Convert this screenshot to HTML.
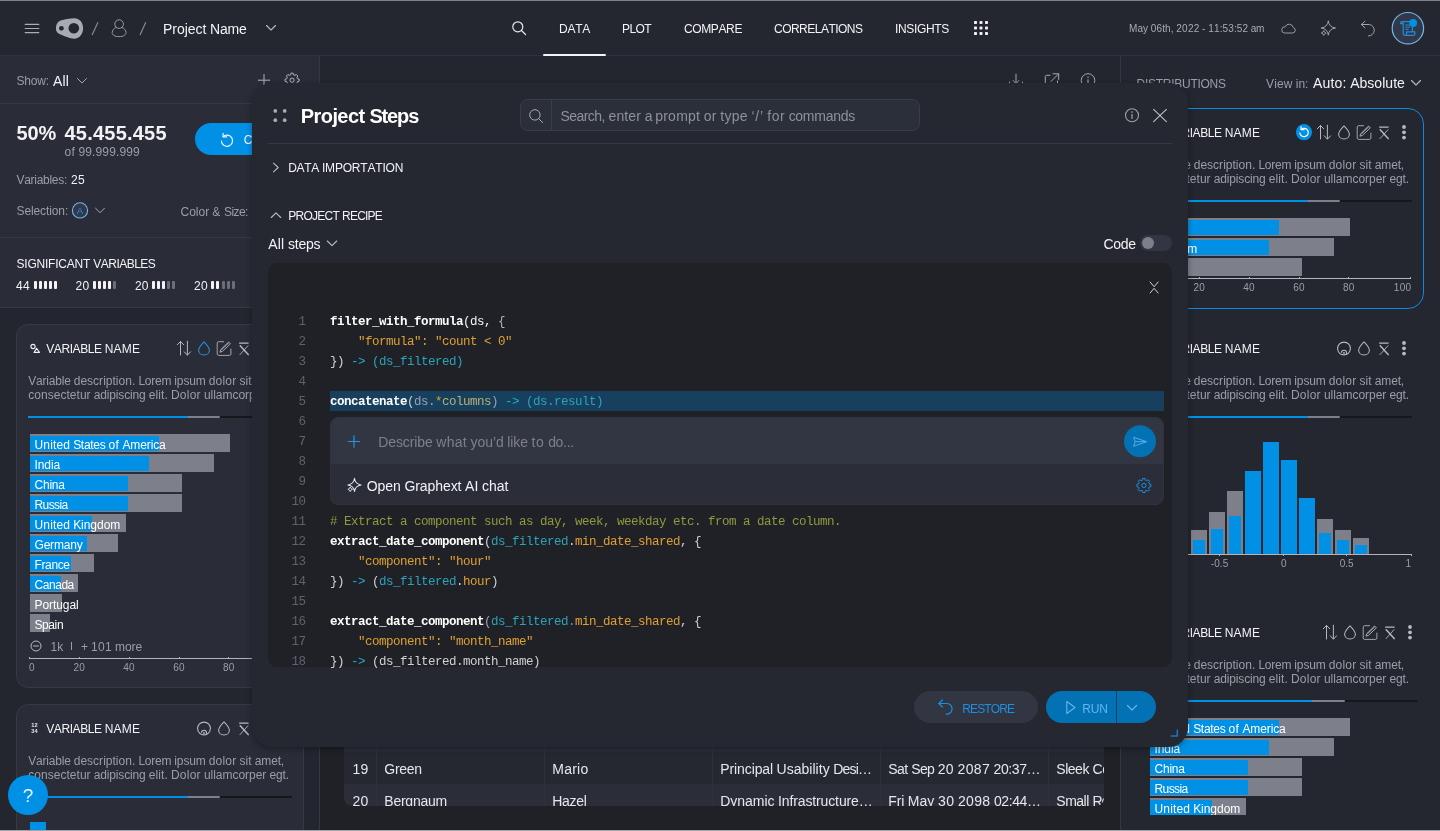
<!DOCTYPE html>
<html lang="en"><head><meta charset="utf-8"><title>Project Steps</title>
<style>
html,body{margin:0;padding:0;background:#1f2127;}
body{width:1440px;height:831px;overflow:hidden;}
#root{position:relative;width:1440px;height:831px;overflow:hidden;will-change:transform;font-family:"Liberation Sans",sans-serif;font-kerning:none;-webkit-font-smoothing:antialiased;}
.b{position:absolute;display:block;}
.t{position:absolute;white-space:pre;margin:0;}
.c{font-family:"Liberation Mono",monospace;font-size:12.5px;letter-spacing:-0.5px;line-height:20px;}
</style></head>
<body>
<div id="root">
<div class="b" style="left:320px;top:56px;width:800px;height:775px;background:#1f2127;"></div>
<div class="b" style="left:320px;top:56px;width:800px;height:48px;background:#23262f;"></div>
<svg class="b" style="left:1008px;top:72px;" width="16" height="18" viewBox="0 0 16 18" fill="none"><path d="M8 2.2 V11.4 M5.2 8.6 L8 11.6 L10.8 8.6" stroke="#a6a8b0" stroke-width="1" stroke-linecap="round" stroke-linejoin="round"/><path d="M1.5 10 V14.5 H14.5 V10" stroke="#a6a8b0" stroke-width="1" stroke-linecap="round" stroke-linejoin="round"/></svg>
<svg class="b" style="left:1044px;top:72px;" width="16" height="16" viewBox="0 0 16 16" fill="none"><path d="M6 3.3 H2.6 C1.8 3.3 1.3 3.8 1.3 4.6 V13.4 C1.3 14.2 1.8 14.7 2.6 14.7 H12.2 C13 14.7 13.5 14.2 13.5 13.4 V9" stroke="#a6a8b0" stroke-width="1" stroke-linecap="round"/><path d="M9 1.8 H14.7 V7.5 M14.5 2 L7 9.5" stroke="#a6a8b0" stroke-width="1" stroke-linecap="round" stroke-linejoin="round"/></svg>
<svg class="b" style="left:1080px;top:72px;" width="17" height="17" viewBox="0 0 17 17" fill="none"><g transform="translate(0 0.5)"><circle cx="8" cy="8" r="6.8" stroke="#a6a8b0" stroke-width="1"/><path d="M8 7.2 V11.4" stroke="#a6a8b0" stroke-width="1.1" stroke-linecap="round"/><circle cx="8" cy="4.8" r="0.75" fill="#a6a8b0"/></g></svg>
<div class="b" style="left:344px;top:720px;width:760px;height:86px;border-radius:0 0 8px 8px;overflow:hidden;">
<div class="b" style="left:0px;top:0px;width:760px;height:32px;background:#2b2e39;"></div>
<div class="t" style="left:8.50px;top:8px;font-size:14px;line-height:18px;color:#e6e7ea;letter-spacing:0.334px;">18</div>
<div class="t" style="left:40.30px;top:8px;font-size:14px;line-height:18px;color:#e6e7ea;letter-spacing:-0.162px;">Kuhlman</div>
<div class="t" style="left:208.30px;top:8px;font-size:14px;line-height:18px;color:#e6e7ea;letter-spacing:-0.722px;">Elsa</div>
<div class="t" style="left:376.30px;top:8px;font-size:14px;line-height:18px;color:#e6e7ea;word-spacing:-0.306px;"><span style="letter-spacing:-0.220px">Senior</span> <span style="letter-spacing:0.051px">Web</span> <span style="letter-spacing:-0.031px">Analyst</span></div>
<div class="t" style="left:544.30px;top:8px;font-size:14px;line-height:18px;color:#e6e7ea;word-spacing:-0.306px;"><span style="letter-spacing:-0.708px">Tue</span> <span style="letter-spacing:0.244px">Mar</span> <span style="letter-spacing:0.334px">11</span> <span style="letter-spacing:0.334px">2081</span> <span style="letter-spacing:-0.426px">09:12…</span></div>
<div class="t" style="left:712.30px;top:8px;font-size:14px;line-height:18px;color:#e6e7ea;word-spacing:-0.306px;"><span style="letter-spacing:-0.206px">Rustic</span> <span style="letter-spacing:-1.743px">S</span></div>
<div class="b" style="left:0px;top:32px;width:760px;height:32px;background:#252831;"></div>
<div class="t" style="left:8.50px;top:40px;font-size:14px;line-height:18px;color:#e6e7ea;letter-spacing:0.334px;">19</div>
<div class="t" style="left:40.30px;top:40px;font-size:14px;line-height:18px;color:#e6e7ea;letter-spacing:-0.278px;">Green</div>
<div class="t" style="left:208.30px;top:40px;font-size:14px;line-height:18px;color:#e6e7ea;letter-spacing:0.227px;">Mario</div>
<div class="t" style="left:376.30px;top:40px;font-size:14px;line-height:18px;color:#e6e7ea;word-spacing:-0.306px;"><span style="letter-spacing:-0.110px">Principal</span> <span style="letter-spacing:0.020px">Usability</span> <span style="letter-spacing:-0.829px">Desi…</span></div>
<div class="t" style="left:544.30px;top:40px;font-size:14px;line-height:18px;color:#e6e7ea;word-spacing:-0.306px;"><span style="letter-spacing:-0.544px">Sat</span> <span style="letter-spacing:-0.706px">Sep</span> <span style="letter-spacing:0.334px">20</span> <span style="letter-spacing:0.334px">2087</span> <span style="letter-spacing:-0.426px">20:37…</span></div>
<div class="t" style="left:712.30px;top:40px;font-size:14px;line-height:18px;color:#e6e7ea;word-spacing:-0.306px;"><span style="letter-spacing:-0.469px">Sleek</span> <span style="letter-spacing:-0.373px">Co</span></div>
<div class="b" style="left:0px;top:64px;width:760px;height:32px;background:#2b2e39;"></div>
<div class="t" style="left:8.50px;top:72px;font-size:14px;line-height:18px;color:#e6e7ea;letter-spacing:0.334px;">20</div>
<div class="t" style="left:40.30px;top:72px;font-size:14px;line-height:18px;color:#e6e7ea;letter-spacing:-0.244px;">Bergnaum</div>
<div class="t" style="left:208.30px;top:72px;font-size:14px;line-height:18px;color:#e6e7ea;letter-spacing:-0.293px;">Hazel</div>
<div class="t" style="left:376.30px;top:72px;font-size:14px;line-height:18px;color:#e6e7ea;word-spacing:-0.306px;"><span style="letter-spacing:-0.043px">Dynamic</span> <span style="letter-spacing:-0.128px">Infrastructure…</span></div>
<div class="t" style="left:544.30px;top:72px;font-size:14px;line-height:18px;color:#e6e7ea;word-spacing:-0.306px;"><span style="letter-spacing:-0.184px">Fri</span> <span style="letter-spacing:0.116px">May</span> <span style="letter-spacing:0.334px">30</span> <span style="letter-spacing:0.334px">2098</span> <span style="letter-spacing:-0.426px">02:44…</span></div>
<div class="t" style="left:712.30px;top:72px;font-size:14px;line-height:18px;color:#e6e7ea;word-spacing:-0.306px;"><span style="letter-spacing:-0.497px">Small</span> <span style="letter-spacing:-1.094px">Re</span></div>
<div class="b" style="left:32px;top:0px;width:1px;height:86px;background:#2f323d;"></div>
<div class="b" style="left:199.5px;top:0px;width:1px;height:86px;background:#2f323d;"></div>
<div class="b" style="left:367.5px;top:0px;width:1px;height:86px;background:#2f323d;"></div>
<div class="b" style="left:535.5px;top:0px;width:1px;height:86px;background:#2f323d;"></div>
<div class="b" style="left:703.5px;top:0px;width:1px;height:86px;background:#2f323d;"></div>
</div>
<div class="b" style="left:0px;top:56px;width:320px;height:252px;background:#2a2d38;"></div>
<div class="b" style="left:0px;top:308px;width:320px;height:523px;background:#24262f;"></div>
<div class="b" style="left:319px;top:56px;width:1px;height:775px;background:#343844;"></div>
<div class="t" style="left:16.50px;top:73px;font-size:12px;line-height:16px;color:#9b9ea8;letter-spacing:-0.222px;">Show:</div>
<div class="t" style="left:53.00px;top:72px;font-size:14px;line-height:18px;color:#f3f3f5;letter-spacing:0.166px;">All</div>
<svg class="b" style="left:76px;top:77px;" width="12" height="8" viewBox="0 0 12 8" fill="none"><path d="M1.5 1.5 L6 6 L10.5 1.5" stroke="#a6a8b0" stroke-width="1" stroke-linecap="round" stroke-linejoin="round"/></svg>
<svg class="b" style="left:257px;top:73px;" width="15" height="15" viewBox="0 0 15 15" fill="none"><g transform="translate(0 0.2)"><path d="M7 1.3 V12.7 M1.3 7 H12.7" stroke="#b0b2ba" stroke-width="1" stroke-linecap="round"/></g></svg>
<svg class="b" style="left:284px;top:72px;" width="17" height="17" viewBox="0 0 17 17" fill="none"><g transform="translate(0.1 0.2)"><path d="M6.65 2.57 L6.89 0.99 L9.11 0.99 L9.35 2.57 L10.88 3.20 L12.17 2.26 L13.74 3.83 L12.80 5.12 L13.43 6.65 L15.01 6.89 L15.01 9.11 L13.43 9.35 L12.80 10.88 L13.74 12.17 L12.17 13.74 L10.88 12.80 L9.35 13.43 L9.11 15.01 L6.89 15.01 L6.65 13.43 L5.12 12.80 L3.83 13.74 L2.26 12.17 L3.20 10.88 L2.57 9.35 L0.99 9.11 L0.99 6.89 L2.57 6.65 L3.20 5.12 L2.26 3.83 L3.83 2.26 L5.12 3.20 Z" stroke="#b6b8c0" stroke-width="1.0" stroke-linejoin="round"/><circle cx="8" cy="8" r="2.1" stroke="#b6b8c0" stroke-width="1.0"/></g></svg>
<div class="b" style="left:0px;top:103px;width:320px;height:1px;background:#353945;"></div>
<div class="t" style="left:16.50px;top:120px;font-size:20px;line-height:26px;color:#f3f3f5;letter-spacing:-0.146px;font-weight:700;">50%</div>
<div class="t" style="left:64.50px;top:120px;font-size:20px;line-height:26px;color:#f3f3f5;letter-spacing:0.220px;font-weight:700;">45.455.455</div>
<div class="t" style="left:64.50px;top:144px;font-size:12px;line-height:16px;color:#9b9ea8;word-spacing:-0.262px;"><span style="letter-spacing:0.435px">of</span> <span style="letter-spacing:0.129px">99.999.999</span></div>
<div class="b" style="left:195px;top:123.3px;width:140px;height:32px;background:#0091e6;border-radius:16px;"></div>
<svg class="b" style="left:220px;top:132px;" width="15" height="16" viewBox="0 0 15 16" fill="none"><g transform="translate(0 0.4)"><path d="M3.1 4.3 A5.6 5.6 0 1 1 1.4 8.6" stroke="#f3f8fd" stroke-width="1.15" stroke-linecap="round"/><path d="M3.1 0.8 V4.4 H6.7" stroke="#f3f8fd" stroke-width="1.15" stroke-linecap="round" stroke-linejoin="round"/></g></svg>
<div class="t" style="left:243.70px;top:132px;font-size:12px;line-height:16px;color:#f3f3f5;letter-spacing:-0.653px;">CLEAR</div>
<div class="t" style="left:16.50px;top:172px;font-size:12px;line-height:16px;color:#9b9ea8;letter-spacing:-0.286px;">Variables:</div>
<div class="t" style="left:71.00px;top:172px;font-size:12px;line-height:16px;color:#f3f3f5;letter-spacing:0.286px;">25</div>
<div class="t" style="left:16.50px;top:203px;font-size:12px;line-height:16px;color:#9b9ea8;letter-spacing:-0.110px;">Selection:</div>
<svg class="b" style="left:71px;top:201px;" width="19" height="19" viewBox="0 0 19 19" fill="none"><g transform="translate(0 0.4)"><circle cx="9" cy="9" r="7.6" fill="#33374a" stroke="#6eb9eb" stroke-width="1.1"/><text x="9" y="12.4" text-anchor="middle" font-family="Liberation Sans,sans-serif" font-size="9.5" fill="#1e96e6">A</text></g></svg>
<svg class="b" style="left:94px;top:206px;" width="13" height="9" viewBox="0 0 13 9" fill="none"><g transform="translate(0 0.7)"><path d="M1.5 1.5 L6 6 L10.5 1.5" stroke="#a6a8b0" stroke-width="1" stroke-linecap="round" stroke-linejoin="round"/></g></svg>
<div class="t" style="left:180.50px;top:204px;font-size:12px;line-height:16px;color:#9b9ea8;word-spacing:-0.262px;"><span style="letter-spacing:0.006px">Color</span> <span style="letter-spacing:0.540px">&amp;</span> <span style="letter-spacing:-0.539px">Size:</span></div>
<div class="b" style="left:0px;top:237px;width:320px;height:1px;background:#353945;"></div>
<div class="t" style="left:16.50px;top:256px;font-size:12px;line-height:16px;color:#f3f3f5;word-spacing:-0.262px;"><span style="letter-spacing:-0.210px">SIGNIFICANT</span> <span style="letter-spacing:-0.526px">VARIABLES</span></div>
<div class="t" style="left:16.00px;top:278px;font-size:12px;line-height:16px;color:#f3f3f5;letter-spacing:0.286px;">44</div>
<div class="b" style="left:34.0px;top:281.3px;width:3px;height:8.2px;background:#f3f3f5;border-radius:1px;"></div>
<div class="b" style="left:39.05px;top:281.3px;width:3px;height:8.2px;background:#f3f3f5;border-radius:1px;"></div>
<div class="b" style="left:44.1px;top:281.3px;width:3px;height:8.2px;background:#f3f3f5;border-radius:1px;"></div>
<div class="b" style="left:49.15px;top:281.3px;width:3px;height:8.2px;background:#f3f3f5;border-radius:1px;"></div>
<div class="b" style="left:54.2px;top:281.3px;width:3px;height:8.2px;background:#f3f3f5;border-radius:1px;"></div>
<div class="t" style="left:75.50px;top:278px;font-size:12px;line-height:16px;color:#f3f3f5;letter-spacing:0.286px;">20</div>
<div class="b" style="left:93.2px;top:281.3px;width:3px;height:8.2px;background:#f3f3f5;border-radius:1px;"></div>
<div class="b" style="left:98.25px;top:281.3px;width:3px;height:8.2px;background:#f3f3f5;border-radius:1px;"></div>
<div class="b" style="left:103.3px;top:281.3px;width:3px;height:8.2px;background:#f3f3f5;border-radius:1px;"></div>
<div class="b" style="left:108.35px;top:281.3px;width:3px;height:8.2px;background:#f3f3f5;border-radius:1px;"></div>
<div class="b" style="left:113.4px;top:281.3px;width:3px;height:8.2px;background:#6b6e78;border-radius:1px;"></div>
<div class="t" style="left:134.90px;top:278px;font-size:12px;line-height:16px;color:#f3f3f5;letter-spacing:0.286px;">20</div>
<div class="b" style="left:152.2px;top:281.3px;width:3px;height:8.2px;background:#f3f3f5;border-radius:1px;"></div>
<div class="b" style="left:157.25px;top:281.3px;width:3px;height:8.2px;background:#f3f3f5;border-radius:1px;"></div>
<div class="b" style="left:162.3px;top:281.3px;width:3px;height:8.2px;background:#f3f3f5;border-radius:1px;"></div>
<div class="b" style="left:167.35px;top:281.3px;width:3px;height:8.2px;background:#6b6e78;border-radius:1px;"></div>
<div class="b" style="left:172.4px;top:281.3px;width:3px;height:8.2px;background:#6b6e78;border-radius:1px;"></div>
<div class="t" style="left:194.10px;top:278px;font-size:12px;line-height:16px;color:#f3f3f5;letter-spacing:0.286px;">20</div>
<div class="b" style="left:211.4px;top:281.3px;width:3px;height:8.2px;background:#f3f3f5;border-radius:1px;"></div>
<div class="b" style="left:216.45px;top:281.3px;width:3px;height:8.2px;background:#f3f3f5;border-radius:1px;"></div>
<div class="b" style="left:221.5px;top:281.3px;width:3px;height:8.2px;background:#6b6e78;border-radius:1px;"></div>
<div class="b" style="left:226.55px;top:281.3px;width:3px;height:8.2px;background:#6b6e78;border-radius:1px;"></div>
<div class="b" style="left:231.6px;top:281.3px;width:3px;height:8.2px;background:#6b6e78;border-radius:1px;"></div>
<div class="b" style="left:0px;top:307px;width:320px;height:1px;background:#353945;"></div>
<div class="b" style="left:16px;top:324px;width:288px;height:364px;background:#2a2d38;border-radius:12px;border:1px solid #363a46;box-sizing:border-box;"></div>
<svg class="b" style="left:30px;top:343px;" width="11" height="11" viewBox="0 0 11 11" fill="none"><g transform="translate(0.5 0.5)"><circle cx="2.5" cy="3" r="2.1" stroke="#f0f0f2" stroke-width="1.1"/><path d="M6.1 4.8 L9 8.9 H3.6 Z" stroke="#f0f0f2" stroke-width="1.1" stroke-linejoin="round"/></g></svg>
<div class="t" style="left:46.20px;top:341px;font-size:12px;line-height:16px;color:#f3f3f5;word-spacing:-0.262px;"><span style="letter-spacing:-0.405px">VARIABLE</span> <span style="letter-spacing:0.172px">NAME</span></div>
<svg class="b" style="left:176px;top:340px;" width="16" height="17" viewBox="0 0 16 17" fill="none"><g transform="translate(0.5 0.8)"><path d="M4 14.2 V0.8 M0.8 4 L4 0.6 L7.2 4 M10.9 0.4 V14 M7.7 11 L10.9 14.4 L14.1 11" stroke="#b6b8c0" stroke-width="1" stroke-linecap="round" stroke-linejoin="round"/></g></svg>
<svg class="b" style="left:197px;top:341px;" width="14" height="16" viewBox="0 0 14 16" fill="none"><g transform="translate(0.4 0)"><path d="M6.6 0.9 C6.6 0.9 1.2 6.4 1.2 9.2 C1.2 12 3.6 14 6.6 14 C9.6 14 12 12 12 9.2 C12 6.4 6.6 0.9 6.6 0.9 Z" stroke="#1e96e6" stroke-width="1.05" stroke-linejoin="round"/></g></svg>
<svg class="b" style="left:216px;top:340px;" width="17" height="17" viewBox="0 0 17 17" fill="none"><g transform="translate(0 0.8)"><path d="M7.6 0.9 H2.6 C1.8 0.9 1.2 1.5 1.2 2.3 V13.2 C1.2 14 1.8 14.6 2.6 14.6 H13.5 C14.3 14.6 14.9 14 14.9 13.2 V8.2" stroke="#b6b8c0" stroke-width="1" stroke-linecap="round" opacity="0.85"/><path d="M12.6 1.2 L14.4 3 L6.4 10.6 L3.9 11.4 L4.8 8.8 Z M5.4 9 L12.9 1.9" stroke="#b6b8c0" stroke-width="0.9" stroke-linejoin="round"/></g></svg>
<svg class="b" style="left:238px;top:341px;" width="14" height="16" viewBox="0 0 14 16" fill="none"><g transform="translate(0.2 0)"><path d="M1.3 2.1 H10" stroke="#b6b8c0" stroke-width="1.1" stroke-linecap="round"/><path d="M2 4.7 L10 13.6" stroke="#b6b8c0" stroke-width="1.5" stroke-linecap="round"/><path d="M9.8 4.7 L1.8 13.6" stroke="#b6b8c0" stroke-width="0.9" stroke-linecap="round"/></g></svg>
<div class="t" style="left:28.30px;top:373px;font-size:12px;line-height:16px;color:#9b9ea8;word-spacing:-0.262px;"><span style="letter-spacing:-0.215px">Variable</span> <span style="letter-spacing:0.020px">description.</span> <span style="letter-spacing:-0.232px">Lorem</span> <span style="letter-spacing:-0.130px">ipsum</span> <span style="letter-spacing:0.169px">dolor</span> <span style="letter-spacing:0.126px">sit</span> <span style="letter-spacing:-0.172px">amet,</span></div>
<div class="t" style="left:28.30px;top:387px;font-size:12px;line-height:16px;color:#9b9ea8;word-spacing:-0.262px;"><span style="letter-spacing:0.025px">consectetur</span> <span style="letter-spacing:-0.146px">adipiscing</span> <span style="letter-spacing:0.102px">elit.</span> <span style="letter-spacing:0.235px">Dolor</span> <span style="letter-spacing:-0.025px">ullamcorper</span> <span style="letter-spacing:-0.076px">egt.</span></div>
<div class="b" style="left:28px;top:415.9px;width:264px;height:2.3px;background:#16171b;border-radius:1px;"></div>
<div class="b" style="left:28px;top:415.9px;width:192px;height:2.3px;background:#7d808a;border-radius:1px;"></div>
<div class="b" style="left:28px;top:415.9px;width:160px;height:2.3px;background:#0091e6;border-radius:1px;"></div>
<div class="b" style="left:30px;top:434.2px;width:200.3px;height:18px;background:#7d808a;"></div>
<div class="b" style="left:30px;top:436.2px;width:129.2px;height:14.5px;background:#0091e6;"></div>
<div class="t" style="left:34.50px;top:437px;font-size:12px;line-height:16px;color:#ffffff;word-spacing:-0.262px;"><span style="letter-spacing:0.144px">United</span> <span style="letter-spacing:-0.298px">States</span> <span style="letter-spacing:0.435px">of</span> <span style="letter-spacing:-0.109px">America</span></div>
<div class="b" style="left:30px;top:454.2px;width:184.3px;height:18px;background:#7d808a;"></div>
<div class="b" style="left:30px;top:456.2px;width:119.2px;height:14.5px;background:#0091e6;"></div>
<div class="t" style="left:34.50px;top:457px;font-size:12px;line-height:16px;color:#ffffff;letter-spacing:-0.098px;">India</div>
<div class="b" style="left:30px;top:474.2px;width:152.2px;height:18px;background:#7d808a;"></div>
<div class="b" style="left:30px;top:476.2px;width:98.1px;height:14.5px;background:#0091e6;"></div>
<div class="t" style="left:34.50px;top:477px;font-size:12px;line-height:16px;color:#ffffff;letter-spacing:-0.220px;">China</div>
<div class="b" style="left:30px;top:494.2px;width:152.2px;height:18px;background:#7d808a;"></div>
<div class="b" style="left:30px;top:496.2px;width:98.1px;height:14.5px;background:#0091e6;"></div>
<div class="t" style="left:34.50px;top:497px;font-size:12px;line-height:16px;color:#ffffff;letter-spacing:-0.580px;">Russia</div>
<div class="b" style="left:30px;top:514.2px;width:96.1px;height:18px;background:#7d808a;"></div>
<div class="b" style="left:30px;top:516.2px;width:62.1px;height:14.5px;background:#0091e6;"></div>
<div class="t" style="left:34.50px;top:517px;font-size:12px;line-height:16px;color:#ffffff;word-spacing:-0.262px;"><span style="letter-spacing:0.144px">United</span> <span style="letter-spacing:-0.041px">Kingdom</span></div>
<div class="b" style="left:30px;top:534.2px;width:88.1px;height:18px;background:#7d808a;"></div>
<div class="b" style="left:30px;top:536.2px;width:57.1px;height:14.5px;background:#0091e6;"></div>
<div class="t" style="left:34.50px;top:537px;font-size:12px;line-height:16px;color:#ffffff;letter-spacing:-0.198px;">Germany</div>
<div class="b" style="left:30px;top:554.2px;width:64.1px;height:18px;background:#7d808a;"></div>
<div class="b" style="left:30px;top:556.2px;width:41.1px;height:14.5px;background:#0091e6;"></div>
<div class="t" style="left:34.50px;top:557px;font-size:12px;line-height:16px;color:#ffffff;letter-spacing:-0.365px;">France</div>
<div class="b" style="left:30px;top:574.2px;width:48.1px;height:18px;background:#7d808a;"></div>
<div class="b" style="left:30px;top:576.2px;width:31.0px;height:14.5px;background:#0091e6;"></div>
<div class="t" style="left:34.50px;top:577px;font-size:12px;line-height:16px;color:#ffffff;letter-spacing:-0.452px;">Canada</div>
<div class="b" style="left:30px;top:594.2px;width:32.0px;height:18px;background:#7d808a;"></div>
<div class="t" style="left:34.50px;top:597px;font-size:12px;line-height:16px;color:#ffffff;letter-spacing:-0.076px;">Portugal</div>
<div class="b" style="left:30px;top:614.2px;width:20.0px;height:18px;background:#7d808a;"></div>
<div class="t" style="left:34.50px;top:617px;font-size:12px;line-height:16px;color:#ffffff;letter-spacing:-0.410px;">Spain</div>
<svg class="b" style="left:30px;top:640px;" width="12" height="12" viewBox="0 0 12 12" fill="none"><circle cx="6" cy="6" r="5" stroke="#b9bbc2" stroke-width="1"/><path d="M3.2 6 H8.8" stroke="#b9bbc2" stroke-width="1"/></svg>
<div class="t" style="left:50.50px;top:639px;font-size:12px;line-height:16px;color:#9b9ea8;letter-spacing:0.191px;">1k</div>
<div class="b" style="left:71.2px;top:641.5px;width:1.2px;height:8.5px;background:#9b9ea8;"></div>
<div class="t" style="left:81.00px;top:639px;font-size:12px;line-height:16px;color:#9b9ea8;word-spacing:-0.262px;"><span style="letter-spacing:-0.048px">+</span> <span style="letter-spacing:0.286px">101</span> <span style="letter-spacing:-0.052px">more</span></div>
<div class="b" style="left:29px;top:658.4px;width:263px;height:0.9px;background:#b2b4ba;"></div>
<div class="b" style="left:28.9px;top:657px;width:0.9px;height:1.6px;background:#b2b4ba;"></div>
<div class="t" style="left:29.00px;top:661px;font-size:10px;line-height:14px;color:#9b9ea8;letter-spacing:0.238px;">0</div>
<div class="b" style="left:78.8px;top:657px;width:0.9px;height:1.6px;background:#b2b4ba;"></div>
<div class="t" style="left:73.47px;top:661px;font-size:10px;line-height:14px;color:#9b9ea8;letter-spacing:0.238px;">20</div>
<div class="b" style="left:128.6px;top:657px;width:0.9px;height:1.6px;background:#b2b4ba;"></div>
<div class="t" style="left:123.32px;top:661px;font-size:10px;line-height:14px;color:#9b9ea8;letter-spacing:0.238px;">40</div>
<div class="b" style="left:178.5px;top:657px;width:0.9px;height:1.6px;background:#b2b4ba;"></div>
<div class="t" style="left:173.17px;top:661px;font-size:10px;line-height:14px;color:#9b9ea8;letter-spacing:0.238px;">60</div>
<div class="b" style="left:228.3px;top:657px;width:0.9px;height:1.6px;background:#b2b4ba;"></div>
<div class="t" style="left:223.02px;top:661px;font-size:10px;line-height:14px;color:#9b9ea8;letter-spacing:0.238px;">80</div>
<div class="b" style="left:278.2px;top:657px;width:0.9px;height:1.6px;background:#b2b4ba;"></div>
<div class="t" style="left:269.97px;top:661px;font-size:10px;line-height:14px;color:#9b9ea8;letter-spacing:0.238px;">100</div>
<div class="b" style="left:16px;top:704px;width:288px;height:200px;background:#2a2d38;border-radius:12px;border:1px solid #363a46;box-sizing:border-box;"></div>
<svg class="b" style="left:31px;top:722px;" width="9" height="12" viewBox="0 0 9 12" fill="none"><g transform="translate(0 0.5)"><text x="0.3" y="4.6" font-family="Liberation Sans,sans-serif" font-size="5.6" font-weight="700" fill="#e6e7ea">12</text><text x="0.3" y="10" font-family="Liberation Sans,sans-serif" font-size="5.6" font-weight="700" fill="#e6e7ea">34</text></g></svg>
<div class="t" style="left:46.20px;top:721px;font-size:12px;line-height:16px;color:#f3f3f5;word-spacing:-0.262px;"><span style="letter-spacing:-0.405px">VARIABLE</span> <span style="letter-spacing:0.172px">NAME</span></div>
<svg class="b" style="left:196px;top:721px;" width="16" height="16" viewBox="0 0 16 16" fill="none"><g transform="translate(0.5 0)"><circle cx="7.5" cy="7.5" r="6.4" stroke="#b6b8c0" stroke-width="1.1"/><path d="M5 11.8 C5 10.2 6.1 9.2 7.5 9.2 C8.9 9.2 10 10.2 10 11.8 V13.3" stroke="#b6b8c0" stroke-width="1.1"/><circle cx="7.5" cy="12" r="0.9" fill="#b6b8c0"/></g></svg>
<svg class="b" style="left:217px;top:721px;" width="14" height="16" viewBox="0 0 14 16" fill="none"><g transform="translate(0.4 0)"><path d="M6.6 0.9 C6.6 0.9 1.2 6.4 1.2 9.2 C1.2 12 3.6 14 6.6 14 C9.6 14 12 12 12 9.2 C12 6.4 6.6 0.9 6.6 0.9 Z" stroke="#b6b8c0" stroke-width="1.05" stroke-linejoin="round"/></g></svg>
<svg class="b" style="left:238px;top:721px;" width="14" height="16" viewBox="0 0 14 16" fill="none"><g transform="translate(0.2 0)"><path d="M1.3 2.1 H10" stroke="#b6b8c0" stroke-width="1.1" stroke-linecap="round"/><path d="M2 4.7 L10 13.6" stroke="#b6b8c0" stroke-width="1.5" stroke-linecap="round"/><path d="M9.8 4.7 L1.8 13.6" stroke="#b6b8c0" stroke-width="0.9" stroke-linecap="round"/></g></svg>
<div class="t" style="left:28.30px;top:753px;font-size:12px;line-height:16px;color:#9b9ea8;word-spacing:-0.262px;"><span style="letter-spacing:-0.215px">Variable</span> <span style="letter-spacing:0.020px">description.</span> <span style="letter-spacing:-0.232px">Lorem</span> <span style="letter-spacing:-0.130px">ipsum</span> <span style="letter-spacing:0.169px">dolor</span> <span style="letter-spacing:0.126px">sit</span> <span style="letter-spacing:-0.172px">amet,</span></div>
<div class="t" style="left:28.30px;top:767px;font-size:12px;line-height:16px;color:#9b9ea8;word-spacing:-0.262px;"><span style="letter-spacing:0.025px">consectetur</span> <span style="letter-spacing:-0.146px">adipiscing</span> <span style="letter-spacing:0.102px">elit.</span> <span style="letter-spacing:0.235px">Dolor</span> <span style="letter-spacing:-0.025px">ullamcorper</span> <span style="letter-spacing:-0.076px">egt.</span></div>
<div class="b" style="left:28px;top:795.9px;width:264px;height:2.3px;background:#16171b;border-radius:1px;"></div>
<div class="b" style="left:28px;top:795.9px;width:192px;height:2.3px;background:#7d808a;border-radius:1px;"></div>
<div class="b" style="left:28px;top:795.9px;width:160px;height:2.3px;background:#0091e6;border-radius:1px;"></div>
<div class="b" style="left:30px;top:822px;width:16px;height:10px;background:#0091e6;"></div>
<div class="b" style="left:8px;top:775px;width:40px;height:40px;background:#0091e6;border-radius:20px;"></div>
<div class="t" style="left:22.72px;top:783px;font-size:19px;line-height:26px;color:#e8f4fd;letter-spacing:-2.064px;">?</div>
<div class="b" style="left:1120px;top:56px;width:320px;height:775px;background:#242730;"></div>
<div class="b" style="left:1120px;top:56px;width:1px;height:775px;background:#343844;"></div>
<div class="t" style="left:1136.50px;top:76px;font-size:12px;line-height:16px;color:#9b9ea8;letter-spacing:-0.262px;">DISTRIBUTIONS</div>
<div class="t" style="left:1266.00px;top:76px;font-size:12px;line-height:16px;color:#9b9ea8;word-spacing:-0.262px;"><span style="letter-spacing:0.174px">View</span> <span style="letter-spacing:-0.033px">in:</span></div>
<div class="t" style="left:1313.00px;top:74px;font-size:14px;line-height:18px;color:#f3f3f5;word-spacing:-0.306px;"><span style="letter-spacing:0.168px">Auto:</span> <span style="letter-spacing:0.037px">Absolute</span></div>
<svg class="b" style="left:1410px;top:79px;" width="12" height="8" viewBox="0 0 12 8" fill="none"><path d="M1.5 1.5 L6 6 L10.5 1.5" stroke="#b9bbc2" stroke-width="1.1" stroke-linecap="round" stroke-linejoin="round"/></svg>
<div class="b" style="left:1136px;top:108px;width:288px;height:201px;background:transparent;border-radius:16px;border:1.4px solid #0a8be0;box-sizing:border-box;"></div>
<svg class="b" style="left:1150px;top:127px;" width="11" height="11" viewBox="0 0 11 11" fill="none"><g transform="translate(0.5 0.5)"><circle cx="2.5" cy="3" r="2.1" stroke="#f0f0f2" stroke-width="1.1"/><path d="M6.1 4.8 L9 8.9 H3.6 Z" stroke="#f0f0f2" stroke-width="1.1" stroke-linejoin="round"/></g></svg>
<div class="t" style="left:1166.20px;top:125px;font-size:12px;line-height:16px;color:#f3f3f5;word-spacing:-0.262px;"><span style="letter-spacing:-0.405px">VARIABLE</span> <span style="letter-spacing:0.172px">NAME</span></div>
<svg class="b" style="left:1295px;top:124px;" width="18" height="18" viewBox="0 0 18 18" fill="none"><g transform="translate(0.9 0.1)"><circle cx="8.1" cy="8.1" r="8.1" fill="#0091e6"/><path d="M5.4 5.2 A4.2 4.2 0 1 1 4 9" stroke="#fff" stroke-width="1.2" stroke-linecap="round"/><path d="M5.2 2.6 V5.6 H8.2" stroke="#fff" stroke-width="1.2" stroke-linecap="round" stroke-linejoin="round"/></g></svg>
<svg class="b" style="left:1316px;top:124px;" width="16" height="17" viewBox="0 0 16 17" fill="none"><g transform="translate(0.5 0.8)"><path d="M4 14.2 V0.8 M0.8 4 L4 0.6 L7.2 4 M10.9 0.4 V14 M7.7 11 L10.9 14.4 L14.1 11" stroke="#b6b8c0" stroke-width="1" stroke-linecap="round" stroke-linejoin="round"/></g></svg>
<svg class="b" style="left:1337px;top:125px;" width="14" height="16" viewBox="0 0 14 16" fill="none"><g transform="translate(0.4 0)"><path d="M6.6 0.9 C6.6 0.9 1.2 6.4 1.2 9.2 C1.2 12 3.6 14 6.6 14 C9.6 14 12 12 12 9.2 C12 6.4 6.6 0.9 6.6 0.9 Z" stroke="#b6b8c0" stroke-width="1.05" stroke-linejoin="round"/></g></svg>
<svg class="b" style="left:1356px;top:124px;" width="17" height="17" viewBox="0 0 17 17" fill="none"><g transform="translate(0 0.8)"><path d="M7.6 0.9 H2.6 C1.8 0.9 1.2 1.5 1.2 2.3 V13.2 C1.2 14 1.8 14.6 2.6 14.6 H13.5 C14.3 14.6 14.9 14 14.9 13.2 V8.2" stroke="#b6b8c0" stroke-width="1" stroke-linecap="round" opacity="0.85"/><path d="M12.6 1.2 L14.4 3 L6.4 10.6 L3.9 11.4 L4.8 8.8 Z M5.4 9 L12.9 1.9" stroke="#b6b8c0" stroke-width="0.9" stroke-linejoin="round"/></g></svg>
<svg class="b" style="left:1378px;top:125px;" width="14" height="16" viewBox="0 0 14 16" fill="none"><g transform="translate(0.2 0)"><path d="M1.3 2.1 H10" stroke="#b6b8c0" stroke-width="1.1" stroke-linecap="round"/><path d="M2 4.7 L10 13.6" stroke="#b6b8c0" stroke-width="1.5" stroke-linecap="round"/><path d="M9.8 4.7 L1.8 13.6" stroke="#b6b8c0" stroke-width="0.9" stroke-linecap="round"/></g></svg>
<svg class="b" style="left:1402px;top:125px;" width="4" height="16" viewBox="0 0 4 16" fill="none"><circle cx="2" cy="2" r="1.9" fill="#b9bbc2"/><circle cx="2" cy="7.3" r="1.9" fill="#b9bbc2"/><circle cx="2" cy="12.6" r="1.9" fill="#b9bbc2"/></svg>
<div class="t" style="left:1148.30px;top:157px;font-size:12px;line-height:16px;color:#9b9ea8;word-spacing:-0.262px;"><span style="letter-spacing:-0.215px">Variable</span> <span style="letter-spacing:0.020px">description.</span> <span style="letter-spacing:-0.232px">Lorem</span> <span style="letter-spacing:-0.130px">ipsum</span> <span style="letter-spacing:0.169px">dolor</span> <span style="letter-spacing:0.126px">sit</span> <span style="letter-spacing:-0.172px">amet,</span></div>
<div class="t" style="left:1148.30px;top:171px;font-size:12px;line-height:16px;color:#9b9ea8;word-spacing:-0.262px;"><span style="letter-spacing:0.025px">consectetur</span> <span style="letter-spacing:-0.146px">adipiscing</span> <span style="letter-spacing:0.102px">elit.</span> <span style="letter-spacing:0.235px">Dolor</span> <span style="letter-spacing:-0.025px">ullamcorper</span> <span style="letter-spacing:-0.076px">egt.</span></div>
<div class="b" style="left:1148px;top:200.2px;width:264px;height:2.3px;background:#16171b;border-radius:1px;"></div>
<div class="b" style="left:1148px;top:200.2px;width:192px;height:2.3px;background:#7d808a;border-radius:1px;"></div>
<div class="b" style="left:1148px;top:200.2px;width:160px;height:2.3px;background:#0091e6;border-radius:1px;"></div>
<div class="b" style="left:1150px;top:218.2px;width:200.0px;height:18px;background:#7d808a;"></div>
<div class="b" style="left:1150px;top:220.2px;width:129.0px;height:14.5px;background:#0091e6;"></div>
<div class="t" style="left:1154.50px;top:221px;font-size:12px;line-height:16px;color:#ffffff;letter-spacing:-0.457px;">USA</div>
<div class="b" style="left:1150px;top:238.2px;width:184.0px;height:18px;background:#7d808a;"></div>
<div class="b" style="left:1150px;top:240.2px;width:119.0px;height:14.5px;background:#0091e6;"></div>
<div class="t" style="left:1154.50px;top:241px;font-size:12px;line-height:16px;color:#ffffff;letter-spacing:-0.120px;">Belgium</div>
<div class="b" style="left:1150px;top:258.2px;width:152.0px;height:18px;background:#7d808a;"></div>
<div class="t" style="left:1154.50px;top:261px;font-size:12px;line-height:16px;color:#ffffff;letter-spacing:-0.220px;">China</div>
<div class="b" style="left:1149px;top:278px;width:262px;height:0.9px;background:#b2b4ba;"></div>
<div class="t" style="left:1149.00px;top:281px;font-size:10px;line-height:14px;color:#9b9ea8;letter-spacing:0.238px;">0</div>
<div class="t" style="left:1193.47px;top:281px;font-size:10px;line-height:14px;color:#9b9ea8;letter-spacing:0.238px;">20</div>
<div class="t" style="left:1243.32px;top:281px;font-size:10px;line-height:14px;color:#9b9ea8;letter-spacing:0.238px;">40</div>
<div class="t" style="left:1293.17px;top:281px;font-size:10px;line-height:14px;color:#9b9ea8;letter-spacing:0.238px;">60</div>
<div class="t" style="left:1343.02px;top:281px;font-size:10px;line-height:14px;color:#9b9ea8;letter-spacing:0.238px;">80</div>
<div class="t" style="left:1393.84px;top:281px;font-size:10px;line-height:14px;color:#9b9ea8;letter-spacing:0.238px;">100</div>
<div class="b" style="left:1198.8px;top:276.6px;width:0.9px;height:1.6px;background:#b2b4ba;"></div>
<div class="b" style="left:1248.6px;top:276.6px;width:0.9px;height:1.6px;background:#b2b4ba;"></div>
<div class="b" style="left:1298.5px;top:276.6px;width:0.9px;height:1.6px;background:#b2b4ba;"></div>
<div class="b" style="left:1348.3px;top:276.6px;width:0.9px;height:1.6px;background:#b2b4ba;"></div>
<div class="b" style="left:1409.8999999999999px;top:276.6px;width:0.9px;height:1.6px;background:#b2b4ba;"></div>
<svg class="b" style="left:1151px;top:342px;" width="9" height="12" viewBox="0 0 9 12" fill="none"><g transform="translate(0 0.5)"><text x="0.3" y="4.6" font-family="Liberation Sans,sans-serif" font-size="5.6" font-weight="700" fill="#e6e7ea">12</text><text x="0.3" y="10" font-family="Liberation Sans,sans-serif" font-size="5.6" font-weight="700" fill="#e6e7ea">34</text></g></svg>
<div class="t" style="left:1166.20px;top:341px;font-size:12px;line-height:16px;color:#f3f3f5;word-spacing:-0.262px;"><span style="letter-spacing:-0.405px">VARIABLE</span> <span style="letter-spacing:0.172px">NAME</span></div>
<svg class="b" style="left:1336px;top:341px;" width="16" height="16" viewBox="0 0 16 16" fill="none"><g transform="translate(0.5 0)"><circle cx="7.5" cy="7.5" r="6.4" stroke="#b6b8c0" stroke-width="1.1"/><path d="M5 11.8 C5 10.2 6.1 9.2 7.5 9.2 C8.9 9.2 10 10.2 10 11.8 V13.3" stroke="#b6b8c0" stroke-width="1.1"/><circle cx="7.5" cy="12" r="0.9" fill="#b6b8c0"/></g></svg>
<svg class="b" style="left:1357px;top:341px;" width="14" height="16" viewBox="0 0 14 16" fill="none"><g transform="translate(0.4 0)"><path d="M6.6 0.9 C6.6 0.9 1.2 6.4 1.2 9.2 C1.2 12 3.6 14 6.6 14 C9.6 14 12 12 12 9.2 C12 6.4 6.6 0.9 6.6 0.9 Z" stroke="#b6b8c0" stroke-width="1.05" stroke-linejoin="round"/></g></svg>
<svg class="b" style="left:1378px;top:341px;" width="14" height="16" viewBox="0 0 14 16" fill="none"><g transform="translate(0.2 0)"><path d="M1.3 2.1 H10" stroke="#b6b8c0" stroke-width="1.1" stroke-linecap="round"/><path d="M2 4.7 L10 13.6" stroke="#b6b8c0" stroke-width="1.5" stroke-linecap="round"/><path d="M9.8 4.7 L1.8 13.6" stroke="#b6b8c0" stroke-width="0.9" stroke-linecap="round"/></g></svg>
<svg class="b" style="left:1402px;top:341px;" width="4" height="16" viewBox="0 0 4 16" fill="none"><circle cx="2" cy="2" r="1.9" fill="#b9bbc2"/><circle cx="2" cy="7.3" r="1.9" fill="#b9bbc2"/><circle cx="2" cy="12.6" r="1.9" fill="#b9bbc2"/></svg>
<div class="t" style="left:1148.30px;top:373px;font-size:12px;line-height:16px;color:#9b9ea8;word-spacing:-0.262px;"><span style="letter-spacing:-0.215px">Variable</span> <span style="letter-spacing:0.020px">description.</span> <span style="letter-spacing:-0.232px">Lorem</span> <span style="letter-spacing:-0.130px">ipsum</span> <span style="letter-spacing:0.169px">dolor</span> <span style="letter-spacing:0.126px">sit</span> <span style="letter-spacing:-0.172px">amet,</span></div>
<div class="t" style="left:1148.30px;top:387px;font-size:12px;line-height:16px;color:#9b9ea8;word-spacing:-0.262px;"><span style="letter-spacing:0.025px">consectetur</span> <span style="letter-spacing:-0.146px">adipiscing</span> <span style="letter-spacing:0.102px">elit.</span> <span style="letter-spacing:0.235px">Dolor</span> <span style="letter-spacing:-0.025px">ullamcorper</span> <span style="letter-spacing:-0.076px">egt.</span></div>
<div class="b" style="left:1148px;top:415.9px;width:264px;height:2.3px;background:#16171b;border-radius:1px;"></div>
<div class="b" style="left:1148px;top:415.9px;width:192px;height:2.3px;background:#7d808a;border-radius:1px;"></div>
<div class="b" style="left:1148px;top:415.9px;width:160px;height:2.3px;background:#0091e6;border-radius:1px;"></div>
<div class="b" style="left:1155.2px;top:544px;width:15.7px;height:10px;background:#7d808a;"></div>
<div class="b" style="left:1157.2px;top:548px;width:11.8px;height:6px;background:#0091e6;"></div>
<div class="b" style="left:1171.2px;top:538px;width:15.7px;height:16px;background:#7d808a;"></div>
<div class="b" style="left:1173.2px;top:545px;width:11.8px;height:9px;background:#0091e6;"></div>
<div class="b" style="left:1191.2px;top:530.2px;width:15.7px;height:23.8px;background:#7d808a;"></div>
<div class="b" style="left:1193.2px;top:540px;width:11.8px;height:14px;background:#0091e6;"></div>
<div class="b" style="left:1209.1px;top:512.4px;width:15.7px;height:41.6px;background:#7d808a;"></div>
<div class="b" style="left:1211.1px;top:529.3px;width:11.8px;height:24.7px;background:#0091e6;"></div>
<div class="b" style="left:1227.1px;top:490.5px;width:15.7px;height:63.5px;background:#7d808a;"></div>
<div class="b" style="left:1229.1px;top:516.2px;width:11.8px;height:37.8px;background:#0091e6;"></div>
<div class="b" style="left:1245px;top:471.4px;width:15.7px;height:82.6px;background:#0091e6;"></div>
<div class="b" style="left:1263px;top:442.2px;width:15.7px;height:111.8px;background:#0091e6;"></div>
<div class="b" style="left:1281.1px;top:460.3px;width:15.7px;height:93.7px;background:#0091e6;"></div>
<div class="b" style="left:1299.2px;top:498.4px;width:15.7px;height:55.6px;background:#0091e6;"></div>
<div class="b" style="left:1317.3px;top:519.1px;width:15.7px;height:34.9px;background:#7d808a;"></div>
<div class="b" style="left:1319.3px;top:533.4px;width:11.8px;height:20.6px;background:#0091e6;"></div>
<div class="b" style="left:1335.4px;top:530.2px;width:15.7px;height:23.8px;background:#7d808a;"></div>
<div class="b" style="left:1337.4px;top:540px;width:11.8px;height:14px;background:#0091e6;"></div>
<div class="b" style="left:1353.3px;top:538.2px;width:15.7px;height:15.8px;background:#7d808a;"></div>
<div class="b" style="left:1355.3px;top:544.8px;width:11.8px;height:9.2px;background:#0091e6;"></div>
<div class="b" style="left:1149px;top:553.7px;width:262.5px;height:0.9px;background:#b2b4ba;"></div>
<div class="b" style="left:1155.5px;top:554px;width:0.9px;height:2.2px;background:#b2b4ba;"></div>
<div class="b" style="left:1219.1px;top:554px;width:0.9px;height:2.2px;background:#b2b4ba;"></div>
<div class="b" style="left:1283.3px;top:554px;width:0.9px;height:2.2px;background:#b2b4ba;"></div>
<div class="b" style="left:1345.8px;top:554px;width:0.9px;height:2.2px;background:#b2b4ba;"></div>
<div class="b" style="left:1410.5px;top:554px;width:0.9px;height:2.2px;background:#b2b4ba;"></div>
<div class="t" style="left:1151.40px;top:557px;font-size:10px;line-height:14px;color:#9b9ea8;letter-spacing:0.312px;">-1</div>
<div class="t" style="left:1210.72px;top:557px;font-size:10px;line-height:14px;color:#9b9ea8;letter-spacing:0.111px;">-0.5</div>
<div class="t" style="left:1280.92px;top:557px;font-size:10px;line-height:14px;color:#9b9ea8;letter-spacing:0.238px;">0</div>
<div class="t" style="left:1339.63px;top:557px;font-size:10px;line-height:14px;color:#9b9ea8;letter-spacing:0.020px;">0.5</div>
<div class="t" style="left:1405.44px;top:557px;font-size:10px;line-height:14px;color:#9b9ea8;letter-spacing:0.238px;">1</div>
<svg class="b" style="left:1150px;top:627px;" width="11" height="11" viewBox="0 0 11 11" fill="none"><g transform="translate(0.5 0.5)"><circle cx="2.5" cy="3" r="2.1" stroke="#f0f0f2" stroke-width="1.1"/><path d="M6.1 4.8 L9 8.9 H3.6 Z" stroke="#f0f0f2" stroke-width="1.1" stroke-linejoin="round"/></g></svg>
<div class="t" style="left:1166.20px;top:625px;font-size:12px;line-height:16px;color:#f3f3f5;word-spacing:-0.262px;"><span style="letter-spacing:-0.405px">VARIABLE</span> <span style="letter-spacing:0.172px">NAME</span></div>
<svg class="b" style="left:1322px;top:624px;" width="16" height="17" viewBox="0 0 16 17" fill="none"><g transform="translate(0.5 0.8)"><path d="M4 14.2 V0.8 M0.8 4 L4 0.6 L7.2 4 M10.9 0.4 V14 M7.7 11 L10.9 14.4 L14.1 11" stroke="#b6b8c0" stroke-width="1" stroke-linecap="round" stroke-linejoin="round"/></g></svg>
<svg class="b" style="left:1343px;top:625px;" width="14" height="16" viewBox="0 0 14 16" fill="none"><g transform="translate(0.4 0)"><path d="M6.6 0.9 C6.6 0.9 1.2 6.4 1.2 9.2 C1.2 12 3.6 14 6.6 14 C9.6 14 12 12 12 9.2 C12 6.4 6.6 0.9 6.6 0.9 Z" stroke="#b6b8c0" stroke-width="1.05" stroke-linejoin="round"/></g></svg>
<svg class="b" style="left:1362px;top:624px;" width="17" height="17" viewBox="0 0 17 17" fill="none"><g transform="translate(0 0.8)"><path d="M7.6 0.9 H2.6 C1.8 0.9 1.2 1.5 1.2 2.3 V13.2 C1.2 14 1.8 14.6 2.6 14.6 H13.5 C14.3 14.6 14.9 14 14.9 13.2 V8.2" stroke="#b6b8c0" stroke-width="1" stroke-linecap="round" opacity="0.85"/><path d="M12.6 1.2 L14.4 3 L6.4 10.6 L3.9 11.4 L4.8 8.8 Z M5.4 9 L12.9 1.9" stroke="#b6b8c0" stroke-width="0.9" stroke-linejoin="round"/></g></svg>
<svg class="b" style="left:1384px;top:625px;" width="14" height="16" viewBox="0 0 14 16" fill="none"><g transform="translate(0.2 0)"><path d="M1.3 2.1 H10" stroke="#b6b8c0" stroke-width="1.1" stroke-linecap="round"/><path d="M2 4.7 L10 13.6" stroke="#b6b8c0" stroke-width="1.5" stroke-linecap="round"/><path d="M9.8 4.7 L1.8 13.6" stroke="#b6b8c0" stroke-width="0.9" stroke-linecap="round"/></g></svg>
<svg class="b" style="left:1408px;top:625px;" width="4" height="16" viewBox="0 0 4 16" fill="none"><circle cx="2" cy="2" r="1.9" fill="#b9bbc2"/><circle cx="2" cy="7.3" r="1.9" fill="#b9bbc2"/><circle cx="2" cy="12.6" r="1.9" fill="#b9bbc2"/></svg>
<div class="t" style="left:1148.30px;top:657px;font-size:12px;line-height:16px;color:#9b9ea8;word-spacing:-0.262px;"><span style="letter-spacing:-0.215px">Variable</span> <span style="letter-spacing:0.020px">description.</span> <span style="letter-spacing:-0.232px">Lorem</span> <span style="letter-spacing:-0.130px">ipsum</span> <span style="letter-spacing:0.169px">dolor</span> <span style="letter-spacing:0.126px">sit</span> <span style="letter-spacing:-0.172px">amet,</span></div>
<div class="t" style="left:1148.30px;top:671px;font-size:12px;line-height:16px;color:#9b9ea8;word-spacing:-0.262px;"><span style="letter-spacing:0.025px">consectetur</span> <span style="letter-spacing:-0.146px">adipiscing</span> <span style="letter-spacing:0.102px">elit.</span> <span style="letter-spacing:0.235px">Dolor</span> <span style="letter-spacing:-0.025px">ullamcorper</span> <span style="letter-spacing:-0.076px">egt.</span></div>
<div class="b" style="left:1148px;top:700.2px;width:270px;height:2.3px;background:#16171b;border-radius:1px;"></div>
<div class="b" style="left:1148px;top:700.2px;width:196.5px;height:2.3px;background:#7d808a;border-radius:1px;"></div>
<div class="b" style="left:1148px;top:700.2px;width:163.5px;height:2.3px;background:#0091e6;border-radius:1px;"></div>
<div class="b" style="left:1136px;top:700px;width:300px;height:114.6px;overflow:hidden;">
<div class="b" style="left:14px;top:18.2px;width:200.0px;height:18px;background:#7d808a;"></div>
<div class="b" style="left:14px;top:20.2px;width:129.0px;height:14.5px;background:#0091e6;"></div>
<div class="t" style="left:18.50px;top:21px;font-size:12px;line-height:16px;color:#ffffff;word-spacing:-0.262px;"><span style="letter-spacing:0.144px">United</span> <span style="letter-spacing:-0.298px">States</span> <span style="letter-spacing:0.435px">of</span> <span style="letter-spacing:-0.109px">America</span></div>
<div class="b" style="left:14px;top:38.2px;width:184.0px;height:18px;background:#7d808a;"></div>
<div class="b" style="left:14px;top:40.2px;width:119.0px;height:14.5px;background:#0091e6;"></div>
<div class="t" style="left:18.50px;top:41px;font-size:12px;line-height:16px;color:#ffffff;letter-spacing:-0.098px;">India</div>
<div class="b" style="left:14px;top:58.2px;width:152.0px;height:18px;background:#7d808a;"></div>
<div class="b" style="left:14px;top:60.2px;width:98.0px;height:14.5px;background:#0091e6;"></div>
<div class="t" style="left:18.50px;top:61px;font-size:12px;line-height:16px;color:#ffffff;letter-spacing:-0.220px;">China</div>
<div class="b" style="left:14px;top:78.2px;width:152.0px;height:18px;background:#7d808a;"></div>
<div class="b" style="left:14px;top:80.2px;width:98.0px;height:14.5px;background:#0091e6;"></div>
<div class="t" style="left:18.50px;top:81px;font-size:12px;line-height:16px;color:#ffffff;letter-spacing:-0.580px;">Russia</div>
<div class="b" style="left:14px;top:98.2px;width:96.0px;height:18px;background:#7d808a;"></div>
<div class="b" style="left:14px;top:100.2px;width:62.0px;height:14.5px;background:#0091e6;"></div>
<div class="t" style="left:18.50px;top:101px;font-size:12px;line-height:16px;color:#ffffff;word-spacing:-0.262px;"><span style="letter-spacing:0.144px">United</span> <span style="letter-spacing:-0.041px">Kingdom</span></div>
</div>
<div class="b" style="left:0px;top:0px;width:1440px;height:56px;background:#242730;"></div>
<div class="b" style="left:0px;top:0px;width:1440px;height:1px;background:#7e8087;"></div>
<div class="b" style="left:0px;top:55px;width:1440px;height:1px;background:#2f323d;"></div>
<svg class="b" style="left:24px;top:22px;" width="16" height="13" viewBox="0 0 16 13" fill="none"><path d="M1.2 2.4h13.6M1.2 6.5h13.6M1.2 10.6h13.6" stroke="#aaacb4" stroke-width="1.2" stroke-linecap="round"/></svg>
<svg class="b" style="left:54px;top:17px;" width="31" height="23" viewBox="0 0 31 23" fill="none"><path d="M1.9 11.5 C1.9 7.5 3.5 4.6 6.5 3.5 C10 2.2 16 1.2 20.3 1.2 C25.5 1.2 29.1 5.5 29.1 11 C29.1 17 25.5 21.7 20.3 21.7 C16 21.7 10 19 6.5 17.6 C3.5 16.4 1.9 14.5 1.9 11.5 Z" fill="#a8aab2"/><circle cx="7.4" cy="11.3" r="2.4" fill="#242730"/><circle cx="19.8" cy="11.3" r="5.3" fill="#242730"/></svg>
<svg class="b" style="left:90px;top:20px;" width="10" height="17" viewBox="0 0 10 17" fill="none"><path d="M2.1 15.1 L8 2.3" stroke="#8c8f98" stroke-width="1.1"/></svg>
<svg class="b" style="left:111px;top:18px;" width="16" height="20" viewBox="0 0 16 20" fill="none"><circle cx="8.1" cy="6.1" r="4.3" stroke="#979aa3" stroke-width="1"/><path d="M5.2 9.4 C2.8 10.4 1.2 12.4 1.2 14.6 C1.2 17 3.6 18.6 8.1 18.6 C12.6 18.6 15 17 15 14.6 C15 12.4 13.4 10.4 11 9.4" stroke="#979aa3" stroke-width="1"/></svg>
<svg class="b" style="left:138px;top:20px;" width="10" height="17" viewBox="0 0 10 17" fill="none"><path d="M2 15.1 L7.8 2.3" stroke="#8c8f98" stroke-width="1.1"/></svg>
<div class="t" style="left:163.00px;top:20px;font-size:14px;line-height:18px;color:#f3f3f5;word-spacing:-0.306px;"><span style="letter-spacing:-0.014px">Project</span> <span style="letter-spacing:-0.250px">Name</span></div>
<svg class="b" style="left:265px;top:24px;" width="12" height="8" viewBox="0 0 12 8" fill="none"><path d="M1.5 1.5 L6 6 L10.5 1.5" stroke="#b9bbc2" stroke-width="1.1" stroke-linecap="round" stroke-linejoin="round"/></svg>
<svg class="b" style="left:511px;top:20px;" width="16" height="16" viewBox="0 0 16 16" fill="none"><circle cx="6.8" cy="6.8" r="5" stroke="#e6e7ea" stroke-width="1.2"/><path d="M10.5 10.5 L14.5 14.5" stroke="#e6e7ea" stroke-width="1.2" stroke-linecap="round"/></svg>
<div class="t" style="left:559.00px;top:21px;font-size:12px;line-height:16px;color:#f3f3f5;letter-spacing:-0.251px;">DATA</div>
<div class="t" style="left:622.00px;top:21px;font-size:12px;line-height:16px;color:#f3f3f5;letter-spacing:-0.585px;">PLOT</div>
<div class="t" style="left:684.00px;top:21px;font-size:12px;line-height:16px;color:#f3f3f5;letter-spacing:-0.382px;">COMPARE</div>
<div class="t" style="left:774.00px;top:21px;font-size:12px;line-height:16px;color:#f3f3f5;letter-spacing:-0.515px;">CORRELATIONS</div>
<div class="t" style="left:895.00px;top:21px;font-size:12px;line-height:16px;color:#f3f3f5;letter-spacing:-0.334px;">INSIGHTS</div>
<div class="b" style="left:543px;top:53.6px;width:63px;height:2.8px;background:#f3f3f5;border-radius:1px;"></div>
<svg class="b" style="left:973px;top:20px;" width="16" height="16" viewBox="0 0 16 16" fill="none"><rect x="1.0" y="1.0" width="3" height="3" rx="0.8" fill="#f3f3f5"/><rect x="1.0" y="6.5" width="3" height="3" rx="0.8" fill="#f3f3f5"/><rect x="1.0" y="12.0" width="3" height="3" rx="0.8" fill="#f3f3f5"/><rect x="6.5" y="1.0" width="3" height="3" rx="0.8" fill="#f3f3f5"/><rect x="6.5" y="6.5" width="3" height="3" rx="0.8" fill="#f3f3f5"/><rect x="6.5" y="12.0" width="3" height="3" rx="0.8" fill="#f3f3f5"/><rect x="12.0" y="1.0" width="3" height="3" rx="0.8" fill="#f3f3f5"/><rect x="12.0" y="6.5" width="3" height="3" rx="0.8" fill="#f3f3f5"/><rect x="12.0" y="12.0" width="3" height="3" rx="0.8" fill="#f3f3f5"/></svg>
<div class="t" style="left:1129.00px;top:22px;font-size:10px;line-height:14px;color:#a9abb3;word-spacing:-0.218px;"><span style="letter-spacing:0.083px">May</span> <span style="letter-spacing:0.159px">06th,</span> <span style="letter-spacing:0.238px">2022</span> <span style="letter-spacing:0.385px">-</span> <span style="letter-spacing:0.109px">11:53:52</span> <span style="letter-spacing:-0.348px">am</span></div>
<svg class="b" style="left:1280px;top:22px;" width="17" height="13" viewBox="0 0 17 13" fill="none"><path d="M4.5 11 H12.5 A2.8 2.8 0 0 0 13.2 5.5 A4.2 4.2 0 0 0 5.2 4.8 A3.1 3.1 0 0 0 4.5 11 Z" stroke="#9a9ca5" stroke-width="1" stroke-linejoin="round"/></svg>
<svg class="b" style="left:1319px;top:19px;" width="18" height="18" viewBox="0 0 18 18" fill="none"><path d="M9.3 1.7999999999999998 Q10.0 8.3 16.5 9 Q10.0 9.7 9.3 16.2 Q8.600000000000001 9.7 2.1000000000000005 9 Q8.600000000000001 8.3 9.3 1.7999999999999998 Z" stroke="#a2a4ac" stroke-width="1" stroke-linejoin="round"/><path d="M4.7 11.6 Q5.1000000000000005 13.6 7.1 14 Q5.1000000000000005 14.4 4.7 16.4 Q4.3 14.4 2.3000000000000003 14 Q4.3 13.6 4.7 11.6 Z" stroke="#a2a4ac" stroke-width="0.9" stroke-linejoin="round"/></svg>
<svg class="b" style="left:1359px;top:19px;" width="18" height="19" viewBox="0 0 18 19" fill="none"><path d="M6 2.2 L2.3 5.5 L6 8.9" stroke="#a2a4ac" stroke-width="1" stroke-linecap="round" stroke-linejoin="round"/><path d="M2.5 5.5 H10.5 A5.8 5.8 0 0 1 9.5 17" stroke="#a2a4ac" stroke-width="1" stroke-linecap="round"/></svg>
<svg class="b" style="left:1391px;top:11px;" width="34" height="34" viewBox="0 0 34 34" fill="none"><circle cx="16.9" cy="17.2" r="15.7" fill="#33374a" stroke="#6eb9eb" stroke-width="1.2"/><path d="M12.2 12.5 C12.2 11 11.4 10.6 10.6 10.6 H19.6 C20.8 10.6 21.4 11.4 21.4 12.5 V20.5 M12.2 12.5 V22.6 C12.2 23.8 13 24.4 14 24.4 H22 C23.2 24.4 23.9 23.7 23.9 22.5 V20.8 H15.6 V22.6 C15.6 23.8 14.9 24.4 14 24.4" stroke="#1c8ee0" stroke-width="1.2" stroke-linejoin="round"/><path d="M10.6 10.6 C9.7 10.6 9.5 11.6 9.5 12.6 H12.2" stroke="#1c8ee0" stroke-width="1.1" stroke-linejoin="round"/><path d="M14.3 14 H19 M14.3 16.2 H19 M14.3 18.4 H17.5" stroke="#1c8ee0" stroke-width="1"/><circle cx="22.1" cy="12" r="3.9" fill="#0091e6"/></svg>
<div class="b" style="left:252px;top:83px;width:936px;height:663.5px;background:#252831;border-radius:20px;box-shadow:0 2px 6px rgba(0,0,0,0.35);"></div>
<svg class="b" style="left:273px;top:108px;" width="15" height="15" viewBox="0 0 15 15" fill="none"><g transform="translate(0 0.8)"><circle cx="2.3" cy="2.1" r="1.85" fill="#aaacb4"/><circle cx="2.3" cy="11.4" r="1.85" fill="#aaacb4"/><circle cx="11.7" cy="2.1" r="1.85" fill="#aaacb4"/><circle cx="11.7" cy="11.4" r="1.85" fill="#aaacb4"/></g></svg>
<div class="t" style="left:300.80px;top:103px;font-size:20px;line-height:26px;color:#ffffff;word-spacing:-0.697px;font-weight:700;"><span style="letter-spacing:-0.583px">Project</span> <span style="letter-spacing:-1.149px">Steps</span></div>
<div class="b" style="left:520px;top:99px;width:400px;height:32px;background:#2b2f3a;border-radius:8px;border:1px solid #3a3e4b;box-sizing:border-box;"></div>
<div class="b" style="left:551px;top:100px;width:1px;height:30px;background:#3a3e4b;"></div>
<svg class="b" style="left:528px;top:108px;" width="16" height="16" viewBox="0 0 16 16" fill="none"><circle cx="6.9" cy="6.9" r="5.2" stroke="#aaacb4" stroke-width="1"/><path d="M10.7 10.7 L14.7 14.7" stroke="#aaacb4" stroke-width="1" stroke-linecap="round"/></svg>
<div class="t" style="left:560.50px;top:107px;font-size:14px;line-height:18px;color:#8e919b;word-spacing:-0.306px;"><span style="letter-spacing:-0.552px">Search,</span> <span style="letter-spacing:0.134px">enter</span> <span style="letter-spacing:-0.828px">a</span> <span style="letter-spacing:0.219px">prompt</span> <span style="letter-spacing:0.293px">or</span> <span style="letter-spacing:0.253px">type</span> <span style="letter-spacing:0.734px">‘/’</span> <span style="letter-spacing:0.457px">for</span> <span style="letter-spacing:-0.284px">commands</span></div>
<svg class="b" style="left:1124px;top:107px;" width="17" height="17" viewBox="0 0 17 17" fill="none"><g transform="translate(0 0.2)"><circle cx="8" cy="8" r="6.5" stroke="#a0a2aa" stroke-width="1.1"/><path d="M8 7.2 V11.2" stroke="#a0a2aa" stroke-width="1.2" stroke-linecap="round"/><circle cx="8" cy="4.9" r="0.8" fill="#a0a2aa"/></g></svg>
<svg class="b" style="left:1152px;top:107px;" width="17" height="17" viewBox="0 0 17 17" fill="none"><g transform="translate(0 0.5)"><path d="M1.6 1.9 L14.4 14.1 M14.4 1.9 L1.6 14.1" stroke="#bdbfc6" stroke-width="1.1" stroke-linecap="round"/></g></svg>
<div class="b" style="left:268px;top:143px;width:904px;height:1px;background:#343844;"></div>
<svg class="b" style="left:271px;top:162px;" width="10" height="11" viewBox="0 0 10 11" fill="none"><path d="M2.5 1.2 L7.2 5.5 L2.5 9.8" stroke="#b9bbc2" stroke-width="1.1" stroke-linecap="round" stroke-linejoin="round"/></svg>
<div class="t" style="left:288.30px;top:160px;font-size:12px;line-height:16px;color:#f3f3f5;word-spacing:-0.262px;"><span style="letter-spacing:-0.366px">DATA</span> <span style="letter-spacing:-0.186px">IMPORTATION</span></div>
<svg class="b" style="left:270px;top:211px;" width="12" height="8" viewBox="0 0 12 8" fill="none"><path d="M1.3 6.5 L6 1.8 L10.7 6.5" stroke="#b9bbc2" stroke-width="1.1" stroke-linecap="round" stroke-linejoin="round"/></svg>
<div class="t" style="left:288.30px;top:208px;font-size:12px;line-height:16px;color:#f3f3f5;word-spacing:-0.262px;"><span style="letter-spacing:-0.754px">PROJECT</span> <span style="letter-spacing:-0.817px">RECIPE</span></div>
<div class="t" style="left:268.30px;top:235px;font-size:14px;line-height:18px;color:#f3f3f5;word-spacing:-0.306px;"><span style="letter-spacing:0.166px">All</span> <span style="letter-spacing:-0.223px">steps</span></div>
<svg class="b" style="left:326px;top:239px;" width="13" height="9" viewBox="0 0 13 9" fill="none"><g transform="translate(0 0.5)"><path d="M1.3 1.5 L6 6.2 L10.7 1.5" stroke="#b9bbc2" stroke-width="1.1" stroke-linecap="round" stroke-linejoin="round"/></g></svg>
<div class="t" style="left:1103.40px;top:235px;font-size:14px;line-height:18px;color:#f3f3f5;letter-spacing:-0.272px;">Code</div>
<div class="b" style="left:1140.4px;top:235px;width:31.8px;height:16px;background:#323642;border-radius:8px;"></div>
<div class="b" style="left:1142.3px;top:237px;width:12px;height:12px;background:#7d808c;border-radius:6px;"></div>
<div class="b" style="left:268px;top:263px;width:904px;height:403.7px;background:#1f2127;border-radius:9px;"></div>
<svg class="b" style="left:1148px;top:281px;" width="12" height="13" viewBox="0 0 12 13" fill="none"><path d="M2.1 1 L6.1 5.7 L10.1 1 M2.1 12 L6.1 7.3 L10.1 12" stroke="#cfd1d6" stroke-width="1" stroke-linecap="round" stroke-linejoin="round"/></svg>
<div class="t c" style="left:280px;width:25.5px;text-align:right;top:312px;color:#5f626d;">1</div>
<div class="t c" style="left:280px;width:25.5px;text-align:right;top:332px;color:#5f626d;">2</div>
<div class="t c" style="left:280px;width:25.5px;text-align:right;top:352px;color:#5f626d;">3</div>
<div class="t c" style="left:280px;width:25.5px;text-align:right;top:372px;color:#5f626d;">4</div>
<div class="t c" style="left:280px;width:25.5px;text-align:right;top:392px;color:#5f626d;">5</div>
<div class="t c" style="left:280px;width:25.5px;text-align:right;top:412px;color:#5f626d;">6</div>
<div class="t c" style="left:280px;width:25.5px;text-align:right;top:432px;color:#5f626d;">7</div>
<div class="t c" style="left:280px;width:25.5px;text-align:right;top:452px;color:#5f626d;">8</div>
<div class="t c" style="left:280px;width:25.5px;text-align:right;top:472px;color:#5f626d;">9</div>
<div class="t c" style="left:280px;width:25.5px;text-align:right;top:492px;color:#5f626d;">10</div>
<div class="t c" style="left:280px;width:25.5px;text-align:right;top:512px;color:#5f626d;">11</div>
<div class="t c" style="left:280px;width:25.5px;text-align:right;top:532px;color:#5f626d;">12</div>
<div class="t c" style="left:280px;width:25.5px;text-align:right;top:552px;color:#5f626d;">13</div>
<div class="t c" style="left:280px;width:25.5px;text-align:right;top:572px;color:#5f626d;">14</div>
<div class="t c" style="left:280px;width:25.5px;text-align:right;top:592px;color:#5f626d;">15</div>
<div class="t c" style="left:280px;width:25.5px;text-align:right;top:612px;color:#5f626d;">16</div>
<div class="t c" style="left:280px;width:25.5px;text-align:right;top:632px;color:#5f626d;">17</div>
<div class="t c" style="left:280px;width:25.5px;text-align:right;top:652px;color:#5f626d;">18</div>
<div class="b" style="left:330px;top:391px;width:834px;height:20px;background:#17405e;"></div>
<div class="t c" style="left:330px;top:312px;"><span style="color:#ffffff;font-weight:700;">filter_with_formula</span><span style="color:#f3f3f5;">(ds, </span><span style="color:#b0b3ba;">{</span></div>
<div class="t c" style="left:330px;top:332px;"><span style="color:#e0a030;">    "formula": "count &lt; 0"</span></div>
<div class="t c" style="left:330px;top:352px;"><span style="color:#cfd1d6;">})</span><span style="color:#2aa9c4;"> -&gt; </span><span style="color:#2ba3b8;">(ds_filtered)</span></div>
<div class="t c" style="left:330px;top:392px;"><span style="color:#ffffff;font-weight:700;">concatenate</span><span style="color:#cfd1d6;">(</span><span style="color:#9aa0aa;">ds.</span><span style="color:#e0a030;">*</span><span style="color:#b9b070;">columns</span><span style="color:#9aa0aa;">)</span><span style="color:#2aa9c4;"> -&gt; </span><span style="color:#2ba3b8;">(ds.result)</span></div>
<div class="t c" style="left:330px;top:512px;"><span style="color:#8f9a3c;"># Extract a component such as day, week, weekday etc. from a date column.</span></div>
<div class="t c" style="left:330px;top:532px;"><span style="color:#ffffff;font-weight:700;">extract_date_component</span><span style="color:#cfd1d6;">(</span><span style="color:#2ba3b8;">ds_filtered</span><span style="color:#cfd1d6;">.</span><span style="color:#e0a030;">min_date_shared</span><span style="color:#cfd1d6;">, {</span></div>
<div class="t c" style="left:330px;top:552px;"><span style="color:#e0a030;">    "component": "hour"</span></div>
<div class="t c" style="left:330px;top:572px;"><span style="color:#cfd1d6;">})</span><span style="color:#2aa9c4;"> -&gt; </span><span style="color:#cfd1d6;">(</span><span style="color:#2ba3b8;">ds_filtered</span><span style="color:#cfd1d6;">.</span><span style="color:#e0a030;">hour</span><span style="color:#cfd1d6;">)</span></div>
<div class="t c" style="left:330px;top:612px;"><span style="color:#ffffff;font-weight:700;">extract_date_component</span><span style="color:#9aa0aa;">(</span><span style="color:#2ba3b8;">ds_filtered</span><span style="color:#2ba3b8;">.</span><span style="color:#e0a030;">min_date_shared</span><span style="color:#cfd1d6;">, {</span></div>
<div class="t c" style="left:330px;top:632px;"><span style="color:#e0a030;">    "component": "month_name"</span></div>
<div class="t c" style="left:330px;top:652px;"><span style="color:#cfd1d6;">})</span><span style="color:#2aa9c4;"> -&gt; </span><span style="color:#cfd1d6;">(ds_filtered.month_name)</span></div>
<div class="b" style="left:330px;top:417px;width:834px;height:88px;border-radius:8px;overflow:hidden;border:1px solid #30333f;box-sizing:border-box;background:#2b2e39;"><div class="b" style="left:-1px;top:-1px;width:836px;height:47.4px;background:#323642;"></div></div>
<svg class="b" style="left:347px;top:434px;" width="15" height="15" viewBox="0 0 15 15" fill="none"><g transform="translate(0 0.5)"><path d="M7 1.3 V12.7 M1.3 7 H12.7" stroke="#2396e4" stroke-width="1.15" stroke-linecap="round"/></g></svg>
<div class="t" style="left:378.30px;top:433px;font-size:14px;line-height:18px;color:#7d808c;word-spacing:-0.306px;"><span style="letter-spacing:-0.108px">Describe</span> <span style="letter-spacing:0.281px">what</span> <span style="letter-spacing:-0.084px">you’d</span> <span style="letter-spacing:-0.060px">like</span> <span style="letter-spacing:0.623px">to</span> <span style="letter-spacing:-0.310px">do...</span></div>
<svg class="b" style="left:1124px;top:425px;" width="33" height="33" viewBox="0 0 33 33" fill="none"><g transform="translate(0 0.3)"><circle cx="16" cy="16" r="16" fill="#0272b4"/><path d="M9.6 12 L22.6 16.4 L9.6 21 L11.2 16.4 Z M11.2 16.4 H22" stroke="#55aee8" stroke-width="1" stroke-linejoin="round"/></g></svg>
<svg class="b" style="left:346px;top:477px;" width="17" height="17" viewBox="0 0 17 17" fill="none"><path d="M8.5 1.3000000000000007 Q9.2 7.2 15.1 7.9 Q9.2 8.6 8.5 14.5 Q7.8 8.6 1.9000000000000004 7.9 Q7.8 7.2 8.5 1.3000000000000007 Z" stroke="#e6e7ea" stroke-width="1.05" stroke-linejoin="round"/><path d="M4.2 10.0 Q4.6000000000000005 11.9 6.5 12.3 Q4.6000000000000005 12.700000000000001 4.2 14.600000000000001 Q3.8000000000000003 12.700000000000001 1.9000000000000004 12.3 Q3.8000000000000003 11.9 4.2 10.0 Z" stroke="#e6e7ea" stroke-width="0.9" stroke-linejoin="round"/></svg>
<div class="t" style="left:366.70px;top:477px;font-size:14px;line-height:18px;color:#f3f3f5;word-spacing:-0.306px;"><span style="letter-spacing:-0.033px">Open</span> <span style="letter-spacing:-0.072px">Graphext</span> <span style="letter-spacing:0.085px">AI</span> <span style="letter-spacing:-0.020px">chat</span></div>
<svg class="b" style="left:1135px;top:477px;" width="17" height="17" viewBox="0 0 17 17" fill="none"><g transform="translate(0.9 0.5)"><path d="M6.65 2.57 L6.89 0.99 L9.11 0.99 L9.35 2.57 L10.88 3.20 L12.17 2.26 L13.74 3.83 L12.80 5.12 L13.43 6.65 L15.01 6.89 L15.01 9.11 L13.43 9.35 L12.80 10.88 L13.74 12.17 L12.17 13.74 L10.88 12.80 L9.35 13.43 L9.11 15.01 L6.89 15.01 L6.65 13.43 L5.12 12.80 L3.83 13.74 L2.26 12.17 L3.20 10.88 L2.57 9.35 L0.99 9.11 L0.99 6.89 L2.57 6.65 L3.20 5.12 L2.26 3.83 L3.83 2.26 L5.12 3.20 Z" stroke="#1490e4" stroke-width="1.0" stroke-linejoin="round"/><circle cx="8" cy="8" r="2.1" stroke="#1490e4" stroke-width="1.0"/></g></svg>
<div class="b" style="left:914px;top:691.3px;width:124px;height:32px;background:#323642;border-radius:16px;"></div>
<svg class="b" style="left:937px;top:698px;" width="18" height="18" viewBox="0 0 18 18" fill="none"><path d="M5.5 2 L1.8 5.5 L5.5 9" stroke="#1b8fe0" stroke-width="1.2" stroke-linecap="round" stroke-linejoin="round"/><path d="M2 5.5 H10.6 A5.4 5.4 0 0 1 9.2 16.2" stroke="#1b8fe0" stroke-width="1.2" stroke-linecap="round"/></svg>
<div class="t" style="left:962.30px;top:701px;font-size:12px;line-height:16px;color:#1b8fe0;letter-spacing:-0.899px;">RESTORE</div>
<div class="b" style="left:1046px;top:691.3px;width:110px;height:32px;background:#0272b4;border-radius:16px;"></div>
<div class="b" style="left:1116px;top:691.3px;width:1.2px;height:32px;background:#163f5e;"></div>
<svg class="b" style="left:1065px;top:700px;" width="12" height="15" viewBox="0 0 12 15" fill="none"><path d="M1.8 1.5 L10 7.5 L1.8 13.5 Z" stroke="#62b4ee" stroke-width="1.1" stroke-linejoin="round"/></svg>
<div class="t" style="left:1082.30px;top:701px;font-size:12px;line-height:16px;color:#62b4ee;letter-spacing:-0.180px;">RUN</div>
<svg class="b" style="left:1126px;top:704px;" width="12" height="8" viewBox="0 0 12 8" fill="none"><path d="M1.5 1.5 L6 6 L10.5 1.5" stroke="#62b4ee" stroke-width="1.2" stroke-linecap="round" stroke-linejoin="round"/></svg>
<svg class="b" style="left:1170px;top:729px;" width="9" height="9" viewBox="0 0 9 9" fill="none"><path d="M7.3 0.4 V7 H0.8" stroke="#1b78be" stroke-width="1.5"/></svg>
<div class="b" style="left:0px;top:830px;width:1440px;height:1px;background:#a2a4aa;"></div>
</div>
</body></html>
